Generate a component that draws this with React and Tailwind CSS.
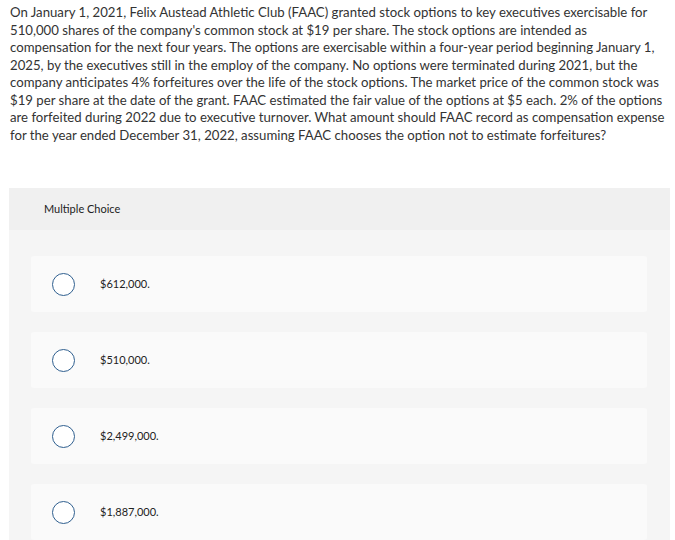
export default function App() {
  const options = ["$612,000.", "$510,000.", "$2,499,000.", "$1,887,000."];
  const lines = [
    "On January 1, 2021, Felix Austead Athletic Club (FAAC) granted stock options to key executives exercisable for",
    "510,000 shares of the company's common stock at $19 per share. The stock options are intended as",
    "compensation for the next four years. The options are exercisable within a four-year period beginning January 1,",
    "2025, by the executives still in the employ of the company. No options were terminated during 2021, but the",
    "company anticipates 4% forfeitures over the life of the stock options. The market price of the common stock was",
    "$19 per share at the date of the grant. FAAC estimated the fair value of the options at $5 each. 2% of the options",
    "are forfeited during 2022 due to executive turnover. What amount should FAAC record as compensation expense",
    "for the year ended December 31, 2022, assuming FAAC chooses the option not to estimate forfeitures?",
  ];
  return (
    <div className="w-[675px] h-[540px] overflow-hidden bg-white text-[#333333]" style={{ fontFamily: "Lato, 'Open Sans', sans-serif" }}>
      <div className="pl-[10px] pt-[4px] text-[13.2px] leading-[17.5px] h-[148px]">
        {lines.map((l) => (
          <div key={l} className="whitespace-nowrap">{l}</div>
        ))}
      </div>
      <div className="mt-[40px] ml-[9px] w-[661px] bg-[#f5f5f5]">
        <div className="h-[42px] bg-[#f0f0f0] flex items-center pl-[35px] text-[11px] text-[#222]">Multiple Choice</div>
        <div className="pt-[26px] pl-[22px] pr-[23px] flex flex-col gap-[20px]">
          {options.map((o) => (
            <div key={o} className="h-[56px] bg-[#fafafa] rounded-[3px] flex items-center">
              <div className="ml-[21px] w-[23px] h-[23px] rounded-full border-[1.5px] border-[#2f5f8f] bg-white" />
              <span className="ml-[25px] text-[11px] text-[#222]">{o}</span>
            </div>
          ))}
        </div>
      </div>
    </div>
  );
}
